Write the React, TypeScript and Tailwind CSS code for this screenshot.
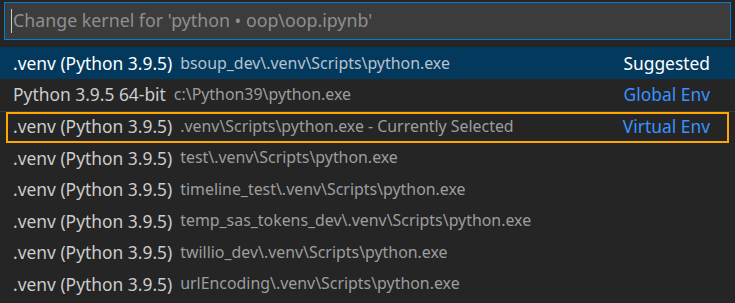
import React from 'react';

type Kernel = {
    label: string;
    desc: string;
    tag?: string;
    active?: boolean;
    current?: boolean;
    separator?: boolean;
};

const kernels: Kernel[] = [
    { label: '.venv (Python 3.9.5)', desc: 'bsoup_dev\\.venv\\Scripts\\python.exe', tag: 'Suggested', active: true },
    { label: 'Python 3.9.5 64-bit', desc: 'c:\\Python39\\python.exe', tag: 'Global Env' },
    { label: '.venv (Python 3.9.5)', desc: '.venv\\Scripts\\python.exe - Currently Selected', tag: 'Virtual Env', current: true, separator: true },
    { label: '.venv (Python 3.9.5)', desc: 'test\\.venv\\Scripts\\python.exe' },
    { label: '.venv (Python 3.9.5)', desc: 'timeline_test\\.venv\\Scripts\\python.exe' },
    { label: '.venv (Python 3.9.5)', desc: 'temp_sas_tokens_dev\\.venv\\Scripts\\python.exe' },
    { label: '.venv (Python 3.9.5)', desc: 'twillio_dev\\.venv\\Scripts\\python.exe' },
    { label: '.venv (Python 3.9.5)', desc: 'urlEncoding\\.venv\\Scripts\\python.exe' },
];

function KernelRow({ k }: { k: Kernel }) {
    return (
        <li className={k.separator ? 'border-t border-[#3a3a3a]' : ''}>
            <div
                className={
                    k.active
                        ? 'flex h-[32px] items-center bg-[#04395e] pt-px pr-[25px] pl-[13px]'
                        : k.current
                          ? 'mx-[6px] flex h-[31px] items-center border-2 border-[#ffa600] pr-[17px] pl-[5px]'
                          : 'flex h-[31.5px] items-center pr-[25px] pl-[13px]'
                }
            >
                <span className={k.active ? 'text-[17.4px] text-white' : 'text-[17.4px] text-[#cccccc]'}>{k.label}</span>
                <span className={k.active ? 'ml-[8px] text-[15.9px] text-[#b5c3cf]' : 'ml-[8px] text-[15.9px] text-[#9d9d9d]'}>
                    {k.desc}
                </span>
                {k.tag && (
                    <span className={k.active ? 'ml-auto text-[17.4px] text-white' : 'ml-auto text-[17.4px] text-[#3794ff]'}>
                        {k.tag}
                    </span>
                )}
            </div>
        </li>
    );
}

export default function App() {
    return (
        <div className="h-[303px] w-[735px] overflow-hidden bg-[#252526] font-['Noto_Sans',sans-serif] leading-none">
            <div className="px-[4px] pt-[2px]">
                <div className="flex h-[38px] items-center border border-[#007fd4] bg-[#3c3c3c] pl-[6px]">
                    <span className="h-[24px] w-px bg-[#cccccc]" />
                    <span className="ml-px text-[17.8px] text-[#8f8f8f]">Change kernel for 'python • oop\oop.ipynb'</span>
                </div>
            </div>
            <ul className="mt-[7px]">
                {kernels.map((k, i) => (
                    <KernelRow key={i} k={k} />
                ))}
            </ul>
        </div>
    );
}
